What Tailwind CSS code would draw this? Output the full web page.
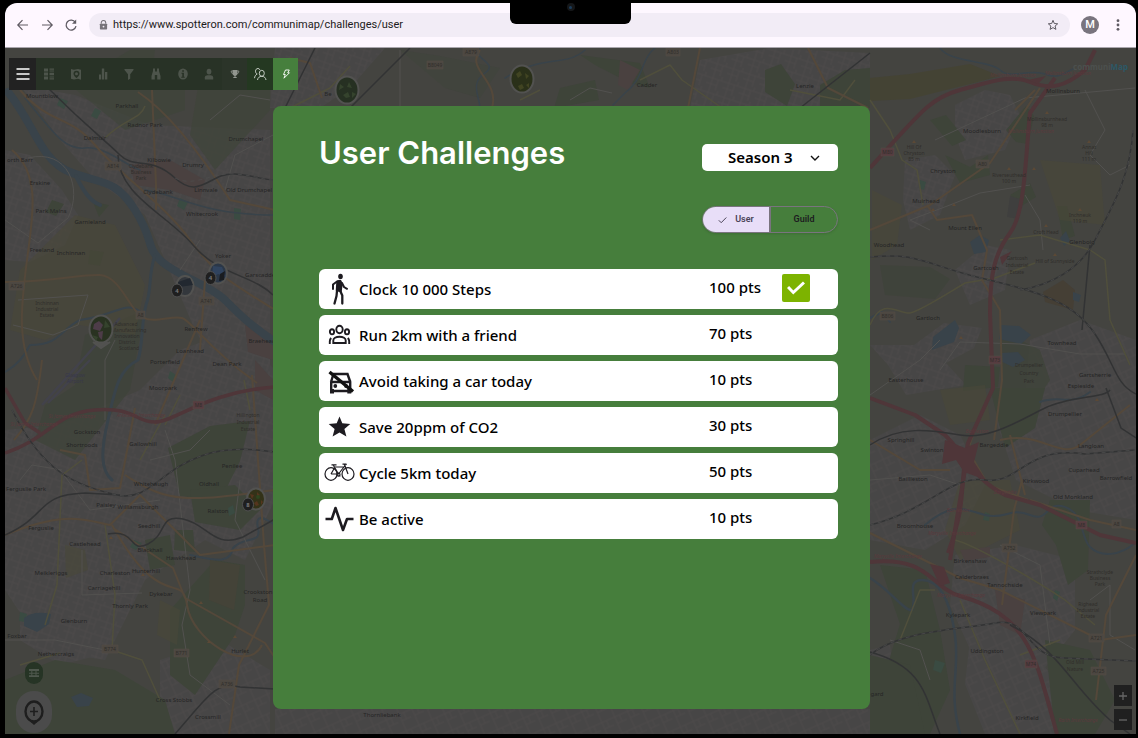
<!DOCTYPE html>
<html lang="en">
<head>
<meta charset="utf-8">
<meta name="viewport" content="width=device-width, initial-scale=1">
<title>CommuniMap – User Challenges</title>
<script src="https://cdn.jsdelivr.net/npm/@tailwindcss/browser@4"></script>
</head>
<body class="bg-black font-['Noto_Sans',sans-serif] text-black">
<div class="flex min-h-screen flex-col pt-[3px] pr-[2px] pb-[4px] pl-[5px]">

  <!-- Browser bar -->
  <header class="relative flex h-[45px] items-center rounded-t-xl border-b border-[#aaa6ad] bg-[#fef7ff] pr-[10px] pl-[10px] text-[#5f5b63]">
    <div class="flex items-center gap-2">
      <button aria-label="Back" class="grid size-4 place-items-center"><svg class="size-4" viewBox="0 0 16 16" fill="none" stroke="currentColor" stroke-width="1.2"><path d="M13 8H3M7.5 3.2 2.8 8l4.7 4.8"/></svg></button>
      <button aria-label="Forward" class="grid size-4 place-items-center"><svg class="size-4" viewBox="0 0 16 16" fill="none" stroke="currentColor" stroke-width="1.2"><path d="M3 8h10M8.500 3.200 13.200 8l-4.700 4.800"/></svg></button>
      <button aria-label="Reload" class="grid size-4 place-items-center"><svg class="size-4" viewBox="0 0 16 16" fill="none" stroke="currentColor" stroke-width="1.3"><path d="M12.300 5.300A5 5 0 1 0 13 9.200"/><path d="M13.200 2.500v4.200H9z" fill="currentColor" stroke="none"/></svg></button>
    </div>
    <div class="ml-[10px] flex h-6 flex-1 items-center rounded-full bg-[#f2ecf6] pr-[11px] pl-[10px]">
      <svg class="h-[10px] w-[9px] text-[#77737a]" viewBox="0 0 10 11"><path d="M2.500 4V3a2.500 2.500 0 0 1 5 0v1" fill="none" stroke="currentColor" stroke-width="1.200"/><rect x="1" y="4" width="8" height="6.500" rx=".8" fill="currentColor"/><circle cx="5" cy="7.200" r="1" fill="#f2ecf6"/></svg>
      <input aria-label="Address" class="ml-[5px] min-w-0 flex-1 bg-transparent font-['Roboto',sans-serif] text-[11px] text-[#1d1b20] outline-none" value="https://www.spotteron.com/communimap/challenges/user">
      <button aria-label="Bookmark" class="grid size-3 place-items-center"><svg class="size-3" viewBox="0 0 12 12" fill="none" stroke="currentColor"><path d="m6 1.300 1.300 3.200 3.400.3-2.600 2.200.8 3.400L6 8.600l-2.900 1.800.8-3.400L1.300 4.800l3.400-.3z"/></svg></button>
    </div>
    <button aria-label="Profile" class="ml-[11px] grid size-[18px] place-items-center rounded-full bg-[#79747e] font-['Roboto',sans-serif] text-[11px] font-medium text-white">M</button>
    <button aria-label="More" class="ml-[11px] grid size-4 place-items-center"><svg class="h-3 w-1" viewBox="0 0 4 12" fill="currentColor"><circle cx="2" cy="1.700" r="1.400"/><circle cx="2" cy="6" r="1.400"/><circle cx="2" cy="10.300" r="1.400"/></svg></button>
    <div class="absolute inset-x-0 -top-[3px] mx-auto h-6 w-[121px] rounded-b-[6px] bg-black">
      <span class="mx-auto mt-[3px] grid size-2 place-items-center rounded-full bg-[#151719]"><span class="size-[3px] rounded-full bg-[#1c3d5c]"></span></span>
    </div>
  </header>

  <main class="relative flex flex-1 flex-col overflow-hidden bg-[#434340]">

    <!-- Dimmed street map -->
    <svg class="absolute inset-0 size-full" viewBox="5 48 1131 686" preserveAspectRatio="xMidYMid slice" font-family="'Noto Sans',sans-serif" font-size="6" text-anchor="middle" aria-hidden="true">
      <defs>
        <pattern id="streets" width="17" height="15" patternUnits="userSpaceOnUse" patternTransform="rotate(18)"><rect width="17" height="15" fill="#474646"/><path d="M0 4h17M5 0v15M0 10h11M11 4v11M14 0v4" stroke="#4c4b4b" stroke-width=".8"/></pattern>
        <pattern id="streets2" width="14" height="18" patternUnits="userSpaceOnUse" patternTransform="rotate(-24)"><rect width="14" height="18" fill="#474646"/><path d="M0 5h14M4 0v18M4 12h10M9 5v7" stroke="#4c4b4b" stroke-width=".8"/></pattern>
      </defs>
      <path d="M5 48h1131v686H5z" fill="#444440"/>

      <!-- Built-up areas -->
      <g fill="url(#streets)">
        <path d="M20 85 75 95 150 125 270 130V420L225 380 195 330 165 260 145 215 95 180 60 140z"/>
        <path d="M5 150 30 155 62 190 78 215 65 245 30 262 5 260z"/>
        <path d="M5 430 60 425 140 390 180 350 235 330 275 370V500l-30 60-40-20-60 40-40 80-60-10-40-60z"/>
        <path d="M20 545 60 535 115 555 125 615 100 655 60 665 20 640z"/>
        <path d="M275 48h110l-35 40-30 20h-50zM700 60l70-12 100 5v55H690z"/>
        <path d="M870 345l18 20 18 30 60-10-20-22 28-15 8-20-38-5-30 22z"/>
        <path d="M955 105l30-15 25 5 10 20-15 35-40 10-10-25z"/>
        <path d="M905 160l30-5 20 20-15 40-30 15-7-30z"/>
        <path d="M955 270l30-25 25 5-5 40-35 15z"/>
      </g>
      <g fill="url(#streets2)">
        <path d="M870 440l50-25 40 20 25 50-20 40-40 25-55-10z"/>
        <path d="M955 555l60-10 60 15v70l-40 50-60-20-25-55z"/>
        <path d="M1030 340l50-20 56 20v180l-60-10-60-30-20-60 30-30z"/>
        <path d="M970 640l50-5 35 45 10 54h-80l-20-50z"/>
        <path d="M160 660l60-20 50 30v64H160z"/>
        <path d="M870 650l20-5 5 50-25 15z"/>
        <path d="M275 709h595v25H275z"/>
      </g>

      <!-- Woodland, parks and fields -->
      <g fill="#3e4439">
        <path d="M130 50h25l-5 40 35-5v25l-60 20-55-45z" opacity=".6"/>
        <path d="M200 75h70v35l-55 60-25-35z" opacity=".7"/>
        <path d="M45 405l30-20 10-50 60-25-15 80-55 70-40-20z" opacity=".8"/>
        <path d="M168 448l42-22 40-5-10 40-20 40-40-5z"/>
        <path d="M175 530h18l2 22-21-2zM145 540l25-5 5 30-25 5z"/>
        <path d="M170 610l45-50 30 5v40l-10 30-40 60-25-20z"/>
        <path d="M210 560l30 5-6 45-25-10z" fill="#444338"/>
        <path d="M5 680l50-20 60 10 50 30 10 34H5z"/>
        <path d="M190 490l45-5 25 25-20 20-45-8z"/>
        <path d="M90 250l14 2-4 14-12-2zM52 200l12 4-8 12-10-4zM93 202l16 3-10 12z"/>
        <path d="M400 50l40 6 60 12-20 30-35-10z" opacity=".5"/>
        <path d="M560 88l35-8 4 20-45 8z"/>
        <path d="M580 55l60 8 10 25-20-5-35-18z"/>
        <path d="M765 70l16-6 14 20-8 22-22-14z"/>
        <path d="M820 85l25-15 25-2v40h-50z"/>
        <path d="M870 78l40-4 60-10 30 12-30 8-60 15-40 2z" fill="#45432f" opacity=".7"/>
        <path d="M930 120l22 26 14-6-20-25z"/>
        <path d="M945 155l25 12 18-12 2 20-30 8z"/>
        <path d="M1006 130l20-24 8 10-6 28-12-2z"/>
        <path d="M1057 206l10 0 8 30-12 4zM1010 195l20-12 6 14-16 10z"/>
        <path d="M880 265l50 2 20 12-15 20-50-4z" opacity=".8"/>
        <path d="M1000 330l40 20 10 30-20 30-28-10z" opacity=".8"/>
        <path d="M965 365l35 2-2 20-35 4z"/>
        <path d="M990 388l55 0-10 40-30 20z"/>
        <path d="M1050 500l40 0-2 70-20 15-12-40-14-20z"/>
        <path d="M880 565l45 5 15 60 10 60-20 44h-40l-5-60 15-50z"/>
        <path d="M1045 640l45 10 25 50-20 34h-40z"/>
        <path d="M870 655l40 10 15 69h-55z"/>
      </g>
      <g fill="#494839" opacity=".6">
        <path d="M75 215l40 10 30 60-10 50-55-10-35 15-35-10 10-60z"/>
        <path d="M960 480l50 0 10 50-60 30-15-30z"/>
        <path d="M872 190l30 15-5 40-25 15zM1040 160l60 5 5 60-45-5z"/>
        <path d="M940 390l45-5 5 35-40 5z"/>
        <path d="M65 545l20 5 3 20-22 8z"/>
        <path d="M160 600l20 10-3 35-20-10z"/>
      </g>
      <path d="M1043 292l20-12 12 10-2 20-28-8z" fill="#453f35"/>
      <path d="M1010 196l10 3-1 20-12-2z" fill="#3f3f3e"/>
      <g fill="#4a4140">
        <path d="M130 165l40-5 35 20-5 20-30-10-35-5zM245 325l28 10v25l-25-8zM255 360l18 20v20l-18-10z"/>
        <path d="M995 590l30 10-5 35-20-10zM960 550l30-3v10l-25 4zM620 60l20 10-12 20-10-5z"/>
      </g>
      <g fill="#3a4b42">
        <path d="M60 98l8 3-4 8-7-4zM95 108l6 3-4 8-6-3zM180 198l8 4-4 8-7-4zM234 208l7 1-1 11-6-1zM170 371l6 4-3 7-5-4zM134 540l8 3-6 7-6-3zM228 508l5-3 2 8-6 3zM985 512l5 2-1 7-6-1zM1055 590l5 2-3 9-4-3zM935 660l10 3-4 10-8-3zM920 180l6 2-2 8-5-2zM20 612l7 2-2 8-6-1z"/>
      </g>

      <!-- Rivers and lochs -->
      <g fill="none" stroke="#39434a" stroke-linecap="round" stroke-linejoin="round">
        <path d="M8 92C35 125 40 160 70 172S115 178 135 210 145 245 160 260 210 285 225 300 250 325 275 342" stroke-width="8"/>
        <path d="M76 176C85 195 92 202 100 205" stroke-width="4"/>
        <path d="M155 255C148 275 152 290 146 305 141 325 143 345 138 360 118 370 115 390 108 420S100 470 112 480" stroke-width="3"/>
        <path d="M141 312C125 300 118 315 80 320 60 330 60 345 30 345 20 365 8 370 5 372" stroke-width="2"/>
        <path d="M25 98C55 135 65 150 85 148S125 165 140 170M145 190C180 195 200 215 275 215" stroke-width="1.500"/>
        <path d="M190 555C215 560 230 565 233 548 245 535 262 545 258 528S268 520 275 525" stroke-width="2"/>
        <path d="M480 48c-10 10 20 15 5 25s-6 22-5 35M505 78c40-25 60-10 80-28M655 48c-15 12-10 30-30 45l-12 12" stroke-width="1.500"/>
        <path d="M940 48c10 15 50 12 60 22s30-2 45 4 20-2 28-5" stroke-width="1.500"/>
        <path d="M870 578C890 590 905 612 912 610 918 600 905 580 922 580S950 600 955 635 948 690 960 734" stroke-width="2.500"/>
        <path d="M925 525c30-25 40-15 60-10s25-8 45 0 15-15 35-8 15 30 25 40 30 10 46-5" stroke-width="2"/>
        <path d="M1040 402c20-8 30 5 50-10M870 318l12-6 8 10" stroke-width="2"/>
      </g>
      <g fill="#39434a">
        <path d="M24 618q10-8 27-4l-2 10-12 8-13-6zM71 697l10-4 12 5-4 8-12 1z"/>
        <path d="M970 242l10-7 9 5-3 12-12 2zM933 337l22-17 4 8-5 14-22 8zM1001 325l18 1 12 9-10 9-22-5zM1002 353l16-1 7 8-12 7-13-6zM1060 238l6-7 4 10-6 5zM1073 292l8 3-2 7-6-2z"/>
      </g>

      <!-- Minor roads -->
      <g fill="none" stroke="#52514f" stroke-width="1" stroke-linejoin="round">
        <path d="M28 158c40-10 55 30 40 60l-30 25L5 220M18 300l70-5-10 30-25 10-40-10M210 120l30-25 30 5M225 190l10-35 38-20M180 270l20-30M5 640h50l50 10M82 550v45l60-2M20 480l12-15 30 5M165 430l10 30 15 130-8 35 8 50 40 30M240 480l-5 40 30 60M105 420v-60l10-20M150 460l40-10 20-20M60 470l30 40 70-10"/>
        <path d="M935 140l90-42 110-10M930 230l-20-10 40-15 30-12 50-8M1085 90l20 40-15 25 20 20 20-10M940 370l20-28 60 2 60 10 45 0M870 395l50-35 20-20M1025 195l15 25 3 30M870 480l60-5 30 10M1000 545l40 20 10 80M890 640l30 10 10 30M1090 600l20-15v50l25 15M400 50v58M570 100l20-12 22 5"/>
      </g>
      <g fill="none" stroke="#504f3c" stroke-width="1.500" stroke-linejoin="round">
        <path d="M105 138c20-20 35-18 40-32M45 625l12-40 5-110 20-15M20 665l40-12M105 525l10 70-3 55 30 10 18 40M140 460l25-45M180 395l-15 30M250 410l-6-30"/>
        <path d="M870 100l20 30 12 30 15 10 6 35M870 325c12-30 30-10 40-12s30-15 55-30l30-5 40-15M1000 240l40-5 50 15 15 10 5 60 20 45M955 540c20 5 80 40 110 60l30 25M960 600l25 60 35 74M900 640l20-50 15 0M1020 655l40-15"/>
        <path d="M290 108l40-20 20-22M520 100l20-10M640 80l30-15 12 15 40 28M790 90l50 10 15-20"/>
      </g>
      <!-- A roads -->
      <g fill="none" stroke="#54483a" stroke-width="2" stroke-linejoin="round">
        <path d="M20 90C50 125 70 115 95 145S165 205 190 240 235 285 275 310"/>
        <path d="M138 92 C165 110 195 145 230 200 L275 210M152 90l4 95 0 25M12 150c30 25 20 70 15 110s-12 85 10 120M5 282c50 0 75-8 95-7s30 35 42 42 30-2 40 1 25 30 75 65"/>
        <path d="M42 360c-5 45-10 60-28 80M125 475c60 40 75 20 275 0M5 535c60-25 80-15 105-10l30-30 60 60 75-10M112 525c50 90 70 45 75 80s60 70 75 40M60 450l25 5 5 35 30-2 15-80M252 375l12 170 5 60-30 60-10 69M200 320l-45 105M205 280l-5 70M113 528l60 40 12 30 80 45 10 15"/>
        <path d="M290 58l20 5 12 35M480 50c-15 20 20 30 12 58M700 48l-12 60M808 48l20 40 40 20"/>
        <path d="M870 230l60-25 60-42 30-45 20-30M927 205l10 15 35-5 15 35-5 30 18 30 2 70-8 60M870 440l50 30 30 0M870 533l60 30 30 15 40 12 100 50 36-5M978 420l-10 30 20 35 40 15M1022 480l-8 30-12 95M1136 555l-30 60-10 85M1000 440c40-10 60 20 80 5l50-40M1030 500l60 20 46 10M1010 435l15 60M1035 90l-20 20"/>
      </g>
      <!-- Motorways -->
      <g fill="none" stroke="#4f3639" stroke-linejoin="round">
        <path d="M5 388l20 35 15 10M5 453c45-15 50-40 90-43s40 12 60 12 50-30 120-35" stroke-width="3.500"/>
        <path d="M870 168c50-55 60-70 90-78s50-16 70-8 35 5 55-12l10-20M1055 78l-25 35c-5 50-5 100-20 120s-20 40-20 80l3 75-25 55c-10 50 0 55-20 110" stroke-width="4"/>
        <path d="M870 398l45 17 30 20c20 20 30 45 60 60l35 10 60 30 36 8M870 562c60-6 60 25 90 34 70 20 75 60 97 138M955 450l10 20-15 90" stroke-width="4"/>
      </g>
      <path d="M945 440l20 8 14-6-5 20 12 18-22-8-8-12-14 4zM930 564l14 3 6 16-10 3zM1000 257l12-6-10 14zM1028 80l18-4-8 8z" fill="#4f3639"/>

      <!-- Railways -->
      <g fill="none" stroke="#323334" stroke-width="1.500">
        <path d="M48 88C90 130 105 140 120 155S150 155 175 178 210 172 235 174 260 180 275 180M118 155c0 40 50 60 75 90s60 30 80 50"/>
        <path d="M12 410c30 60 60 75 105 85s50-60 158-43M5 535c45-20 30-40 80-42l35 2M108 534c30-5 20 20 40 10s10-30 35-25 30 30 60 18l32-18M175 734c35-40 40-52 65-47l35 2"/>
        <path d="M350 108l60-60M800 108l70-55M285 108l30-60"/>
        <path d="M870 257c50-5 55 8 115 22s90 25 110 55 20 50 41 60M1020 290c30-5 60-20 75-50s35-60 38-110M1090 245l-8 85M1106 388l15 40 15 10"/>
        <path d="M870 445c30-20 60-15 90-10s60-15 85-27 60-10 65-18M870 525c60-15 80-50 115-45s40-35 100-26l50-4M870 655c30-25 90-25 125-32s30 35 70 35l71 3M1010 625c50 25 60 60 100 95l20 14M870 652c55 15 55 45 70 82"/>
      </g>
      <g fill="none" stroke="#4c4d4c" stroke-width=".8" stroke-dasharray="4 4">
        <path d="M12 410c30 60 60 75 105 85s50-60 158-43M175 178c20 10 35-6 60-4s25 6 40 6"/>
        <path d="M870 257c50-5 55 8 115 22s90 25 110 55M1020 290c30-5 60-20 75-50s35-60 38-110M870 525c60-15 80-50 115-45s40-35 100-26l50-4M870 655c30-25 90-25 125-32s30 35 70 35l71 3"/>
      </g>
      <path d="M42 405l78-87M48 403l42-43" stroke="#42424b" stroke-width="2.500"/>

      <!-- Place names -->
      <g fill="#252525">
        <text x="42" y="98">Mountblow</text><text x="127" y="108">Parkhall</text><text x="145" y="127">Radnor Park</text><text x="95" y="140">Dalmuir</text><text x="246" y="141">Drumchapel</text><text x="20" y="162">orth Barr</text><text x="159" y="162">Kilbowie</text><text x="193" y="167">Drumry</text><text x="40" y="185">Erskine</text><text x="158" y="194">Clydebank</text><text x="206" y="192">Linnvale</text><text x="249" y="192">Old Drumchapel</text><text x="51" y="213">Park Mains</text><text x="202" y="216">Whitecrook</text><text x="90" y="224">Garnieland</text><text x="42" y="252">Freeland</text><text x="71" y="255">Inchinnan</text><text x="223" y="258">Yoker</text><text x="262" y="277">Garscadden</text><text x="196" y="331">Renfrew</text><text x="262" y="343">Braehead</text><text x="190" y="353">Loanhead</text><text x="165" y="364">Porterfield</text><text x="227" y="366">Dean Park</text><text x="163" y="390">Moorpark</text>
        <text x="87" y="434">Gockston</text><text x="82" y="447">Shortroods</text><text x="143" y="446">Gallowhill</text><text x="26" y="491">Ferguslie Park</text><text x="151" y="486">Whitehaugh</text><text x="209" y="486">Oldhall</text><text x="232" y="468">Penilee</text><text x="106" y="507">Paisley</text><text x="138" y="509">Williamsburgh</text><text x="218" y="513">Ralston</text><text x="41" y="530">Ferguslie</text><text x="149" y="528">Seedhill</text><text x="85" y="546">Castlehead</text><text x="150" y="552">Blackhall</text><text x="181" y="560">Hawkhead</text><text x="51" y="575">Meikleriggs</text><text x="115" y="575">Charleston</text><text x="146" y="573">Hunterhill</text><text x="104" y="590">Carriagehill</text><text x="161" y="596">Dykebar</text><text x="130" y="608">Thornly Park</text><text x="74" y="623">Glenburn</text><text x="17" y="638">Foxbar</text><text x="56" y="656">Nethercraigs</text><text x="240" y="653">Hurlet</text><text x="258" y="594">Crookston</text><text x="260" y="602">Road</text><text x="174" y="702">Cross Stobbs</text><text x="208" y="719">Crossmill</text><text x="382" y="717">Thornliebank</text>
        <text x="328" y="96">Be</text><text x="647" y="87">Cadder</text><text x="805" y="88">Lenzie</text>
        <text x="1063" y="93">Mollinsburn</text><text x="982" y="133">Moodiesburn</text><text x="943" y="173">Chryston</text><text x="926" y="203">Muirhead</text><text x="965" y="230">Mount Ellen</text><text x="986" y="270">Gartcosh</text><text x="889" y="247">Woodhead</text><text x="928" y="320">Gartloch</text><text x="1062" y="345">Townhead</text><text x="906" y="382">Easterhouse</text><text x="1095" y="377">Gartsherrie</text><text x="1081" y="388">Espieside</text><text x="1082" y="244">Glenboig</text>
        <text x="1065" y="416">Drumpellier</text><text x="901" y="442">Springhill</text><text x="932" y="452">Swinton</text><text x="994" y="447">Bargeddie</text><text x="1091" y="448">Langloan</text><text x="913" y="481">Baillieston</text><text x="1084" y="472">Cuparhead</text><text x="1116" y="480">Barrowfield</text><text x="1036" y="483">Kirkwood</text><text x="1073" y="499">Old Monkland</text><text x="915" y="528">Broomhouse</text><text x="970" y="563">Birkenshaw</text><text x="972" y="579">Calderbraes</text><text x="1005" y="587">Tannochside</text><text x="1043" y="615">Viewpark</text><text x="958" y="617">Kylepark</text><text x="987" y="653">Uddingston</text><text x="1027" y="720">Kirkfield</text><text x="877" y="696">gard</text>
      </g>
      <g fill="#302e2b" font-size="5">
        <text x="141" y="168">Clydebank</text><text x="141" y="174">Business</text><text x="141" y="180">Park</text><text x="47" y="305">Inchinnan</text><text x="47" y="311">Industrial</text><text x="47" y="317">Estate</text><text x="126" y="326">Advanced</text><text x="129" y="332">Manufacturing</text><text x="127" y="338">Innovation</text><text x="127" y="344">District</text><text x="129" y="350">Scotland</text><text x="248" y="417">Hillington</text><text x="248" y="424">Industrial</text><text x="248" y="431">Estate</text><text x="75" y="377" fill="#38384a">Glasgow</text><text x="75" y="383" fill="#38384a">Airport</text>
        <text x="914" y="149">Hill Of</text><text x="914" y="155">Chryston</text><text x="914" y="161">85 m</text><text x="1047" y="121">Mollinsburnhead</text><text x="1047" y="127">98 m</text><text x="1089" y="149">Annat</text><text x="1089" y="155">Hill</text><text x="1089" y="161">111 m</text><text x="1009" y="177">Riverseuthead</text><text x="1009" y="183">100 m</text><text x="1080" y="217">Inchneuk</text><text x="1080" y="223">119 m</text><text x="1046" y="234">Croft Head</text><text x="1055" y="263">Hill of Sunnyside</text><text x="1017" y="260">Gartcosh</text><text x="1017" y="267">Industrial</text><text x="1017" y="274">Estate</text><text x="1029" y="367">Drumpellier</text><text x="1029" y="375">Country</text><text x="1029" y="383">Park</text><text x="1100" y="574">Strathclyde</text><text x="1100" y="580">Business</text><text x="1100" y="586">Park</text><text x="1088" y="606">Righead</text><text x="1088" y="612">Industrial</text><text x="1088" y="618">Estate</text><text x="1075" y="664">Old Mill</text><text x="1075" y="671">Nature</text>
      </g>
      <g fill="#5a3a3d" font-size="5" font-style="italic">
        <text x="72" y="418">St James Interchange</text><text x="141" y="417">Arkleston Interchange</text><text x="34" y="426">St James Interchange</text><text x="1013" y="77">Mollinsburn Junction</text><text x="1068" y="75">Mollinsburn Junction</text><text x="1031" y="133">Mollinsburn Junction</text><text x="952" y="535">Maryville Interchange</text><text x="961" y="597">Maryville Interchange</text><text x="898" y="558">Maryville Interchange</text><text x="1078" y="722">Raith Interchange</text><text x="977" y="433">Baillieston</text><text x="958" y="512">Baillieston</text><text x="1005" y="494">Bargeddie</text>
      </g>
      <g fill="#4c4741" stroke="#554e46" stroke-width=".5">
        <path d="M105 162h16v8h-16zM9 282h15v8H9zM199 297h15v8h-15zM136 311h9v8h-9zM102 645h16v8h-16zM174 649h15v8h-15zM219 680h16v8h-16zM976 160h13v8h-13zM880 312h15v8h-15zM1002 544h15v8h-15zM1089 634h15v8h-15zM1091 667h15v8h-15zM1112 520h9v8h-9zM463 48h16v8h-16zM666 48h14v8h-14zM427 61h16v8h-16z"/>
        <path d="M193 401h11v8h-11zM881 148h13v8h-13zM989 356h12v8h-12zM1076 521h11v8h-11zM1025 660h12v8h-12z" fill="#563c40"/>
      </g>
      <g fill="#302e2b" font-size="5">
        <text x="113" y="168">A814</text><text x="16.500" y="288">A726</text><text x="206.500" y="303">A741</text><text x="140.500" y="317">A8</text><text x="110" y="651">B774</text><text x="181.500" y="655">B771</text><text x="227" y="686">A736</text><text x="982.500" y="166">A80</text><text x="887.500" y="318">B806</text><text x="1009.500" y="550">A752</text><text x="1096.500" y="640">A721</text><text x="1098.500" y="673">A725</text><text x="1116.500" y="526">A8</text><text x="198.500" y="407">M8</text><text x="887.500" y="154">M80</text><text x="995" y="362">M73</text><text x="1081.500" y="527">M8</text><text x="1031" y="666">M74</text><text x="471" y="54">A879</text><text x="673" y="54">A803</text><text x="435" y="67">B8049</text>
      </g>
      <g fill="#5b4936">
        <path d="m914 140 2 3h-4zM1047 111l2 3h-4zM1089 140l2 3h-4zM1009 167l2 3h-4zM1034 167l2 3h-4zM954 203l2 3h-4zM933 208l2 3h-4zM1080 208l2 3h-4zM1046 224l2 3h-4zM1055 253l2 3h-4zM961 336l2 3h-4zM1097 398l2 3h-4zM209 640l2 3h-4zM235 635l2 3h-4zM201 601l2 3h-4zM143 573l2 3h-4zM111 536l2 3h-4z"/>
      </g>

      <!-- Photo pins -->
      <g stroke="#525250" stroke-width="2">
        <path d="M93 342l8 6 9-6" fill="#525250"/>
        <ellipse cx="101" cy="329" rx="11.500" ry="13.500" fill="#293221"/>
        <ellipse cx="347" cy="90" rx="11.500" ry="13.500" fill="#263022"/>
        <ellipse cx="522" cy="79" rx="11.500" ry="13.500" fill="#2a3019"/>
        <ellipse cx="185" cy="286" rx="8.500" ry="10" fill="#33373c"/>
        <ellipse cx="218" cy="273" rx="9" ry="10.500" fill="#2b3747"/>
        <ellipse cx="256" cy="499" rx="9" ry="10.500" fill="#333218"/>
      </g>
      <g>
        <path d="M94 324l5-3 4 4-3 6-7-2zM98 332l5-1-1 9-3-3z" fill="#4d3c48"/>
        <path d="M92 335l6 2-2 4zM105 320l5 7-6 1zM340 84l4 3-5 3zM349 82l3 6-5-1zM343 95l5-3 2 5-4 1zM352 92l4 2-4 4z" fill="#35432d"/>
        <path d="M516 74l4-3 2 4-4 3zM525 73l4 3-3 3zM518 86l4-2 2 4-4 2zM526 85l3-2v5z" fill="#414422"/>
        <path d="M178 282l12-4 3 7-14 2z" fill="#222830"/><path d="M213 266l9 1 4 10-8-3-6 4z" fill="#30435e"/>
        <path d="M220 274l5-3-1 9-5 1z" fill="#191c20"/>
        <path d="M250 494l4 1-2 4zM257 492l3 3-3 2zM254 503l3-2 2 4-3 1zM261 500l2 2-2 3z" fill="#55351e"/><circle cx="258" cy="497" r="2" fill="#2e451f"/>
      </g>
      <g fill="#1f1f1f" stroke="#505050" stroke-width="1"><ellipse cx="177" cy="290.500" rx="5.500" ry="6.500"/><ellipse cx="210.500" cy="278" rx="5.500" ry="6.500"/><ellipse cx="248" cy="504.500" rx="5.500" ry="6.500"/></g>
      <g fill="#777" font-size="6" font-weight="700"><text x="177" y="293">4</text><text x="210.500" y="280">4</text><text x="248" y="507">8</text></g>
    </svg>

    <a href="#" class="absolute top-[13px] right-[8px] text-[8px] leading-[12px] font-bold text-[#4c504e]">communi<span class="text-[#2c5866]">Map</span></a>

    <!-- Tool strip -->
    <nav aria-label="Tools" class="absolute top-[10px] left-[4px] flex h-8 bg-[#283226] text-[#4d544b] [&_svg]:size-4">
      <button aria-label="Menu" class="grid w-[27px] place-items-center bg-[#222222] text-white"><svg viewBox="0 0 16 16" stroke="currentColor" stroke-width="1.400"><path d="M1.500 3h13M1.500 8h13M1.500 13h13"/></svg></button>
      <button aria-label="List" class="grid w-[26px] place-items-center"><svg viewBox="0 0 16 16" fill="currentColor"><path d="M3 2.500h4v3H3zM3 6.500h4v3H3zM3 10.500h4v3H3zM8.500 2.500H13v1.200H8.500zM8.500 4.500H13v1H8.500zM8.500 6.700H13v2.500H8.500zM8.500 10.500H13v1H8.500zM8.500 12.300H13v1.200H8.500z"/></svg></button>
      <button aria-label="Map" class="grid w-[27px] place-items-center"><svg viewBox="0 0 16 16" fill="currentColor"><path fill-rule="evenodd" d="m3 3 3 .8 4-.8 3 .7v10l-3-.9-4 .7-3-.8zm5.500 1.800a3 3 0 0 0-3 3c0 2.200 3 4.400 3 4.400s3-2.200 3-4.400a3 3 0 0 0-3-3z"/><circle cx="8.500" cy="7.800" r="1.500"/></svg></button>
      <button aria-label="Statistics" class="grid w-[27px] place-items-center"><svg viewBox="0 0 16 16" fill="currentColor"><path d="M4 8.500h2v5H4zM6.800 2.500h2.400v11H6.800zM10 6h2.300v7.500H10z"/></svg></button>
      <button aria-label="Filter" class="grid w-[26px] place-items-center"><svg viewBox="0 0 16 16" fill="currentColor"><path d="M3.500 3h9v1L9.200 8.200v4.600L7 14V8.200L3.500 4z"/></svg></button>
      <button aria-label="Search" class="grid w-[27px] place-items-center"><svg viewBox="0 0 16 16" fill="currentColor"><path d="M5 2.500h2v3h2v-3h2V5l1.500 5v3.500H9.200V9H6.800v4.500H3.500V10L5 5z"/></svg></button>
      <button aria-label="Information" class="grid w-[27px] place-items-center"><svg viewBox="0 0 16 16"><ellipse cx="8" cy="8" rx="4.800" ry="5.500" fill="currentColor"/><path d="M7.200 4.300h1.700v1.500H7.200zM6.500 6.800h2.400v4h.8v1H6.300v-1h1V7.700h-.8z" fill="#283226"/></svg></button>
      <button aria-label="Profile" class="grid w-[26px] place-items-center"><svg viewBox="0 0 16 16" fill="currentColor"><ellipse cx="8" cy="5.600" rx="2.400" ry="2.900"/><path d="M3.800 13.500v-2c0-1.500 1.500-2.200 2.700-2.200h3c1.200 0 2.700.7 2.700 2.200v2z"/></svg></button>
      <button aria-label="Awards" class="grid w-[25px] place-items-center bg-[#2b3429] text-[#92968f]"><svg viewBox="0 0 16 16"><path d="M5.500 4h5v2.600c0 2-1 3.200-2 3.400V11h1.200v1H6.300v-1h1.200v-1c-1-.2-2-1.400-2-3.400z" fill="currentColor"/><path d="M5.500 5H4.200c0 1.700.5 2.500 1.800 3M10.500 5h1.300c0 1.700-.5 2.500-1.800 3" fill="none" stroke="currentColor" stroke-width=".8"/></svg></button>
      <button aria-label="Guilds" class="grid w-[26px] place-items-center bg-[#243821] text-[#d3d9d1]"><svg viewBox="0 0 16 16" fill="none" stroke="currentColor" stroke-width=".9"><ellipse cx="9.800" cy="7.300" rx="2.500" ry="3"/><path d="M5.500 14c.3-2.200 1.900-3.700 4.300-3.700s3.900 1.500 4.200 3.700M7.900 3.900C7.600 3 6.900 2.500 6 2.500c-1.500 0-2.500 1.100-2.500 2.700 0 1.400.6 2.400 1.700 2.800M2.500 12.200c.2-1.800 1-3.400 2.700-4.200"/></svg></button>
      <button aria-label="Challenges" aria-current="page" class="grid w-[25px] place-items-center bg-[#467f3d] text-white"><svg viewBox="0 0 16 16" fill="none" stroke="currentColor" stroke-width=".9" stroke-linejoin="round"><path d="M7.500 4h3.800L9.700 6.800h1.700L6 12.200l1.300-3.700H5.500z"/></svg></button>
    </nav>

    <!-- Challenges panel -->
    <section aria-labelledby="title" class="relative mx-auto mt-[58px] mb-[25px] min-h-[603px] w-[597px] max-w-full translate-x-px rounded-[8px] bg-[#467e3c] pr-8 pl-[46px]">
      <div class="flex items-start justify-between">
        <h1 id="title" class="mt-[27px] font-['Inter',sans-serif] text-[31px] leading-10 font-semibold text-white">User Challenges</h1>
        <div class="flex w-[136px] flex-col gap-[35px] pt-[38px]">
          <div class="relative">
            <select aria-label="Season" class="block h-[27px] w-full appearance-none rounded-[5px] bg-white pb-px pl-[26px] text-[15px] leading-5 font-semibold"><option>Season 3</option></select>
            <svg class="pointer-events-none absolute top-[10px] right-[18px] h-2 w-[10px]" viewBox="0 0 10 8" fill="none" stroke="#111" stroke-width="1.400"><path d="m1 2 4 4 4-4"/></svg>
          </div>
          <div role="radiogroup" aria-label="Challenge type" class="flex h-[27px] overflow-hidden rounded-full border border-[#79747e] font-['Roboto',sans-serif] text-[9px] font-semibold shadow-sm">
            <label class="flex flex-1 items-center justify-center gap-2 bg-[#e8def8] text-[#4a4458]"><input type="radio" name="type" class="sr-only" checked><svg class="h-2 w-[9px]" viewBox="0 0 9 8" fill="none" stroke="currentColor"><path d="m.8 4.300 2.400 2.400L8.300 1.500"/></svg>User</label>
            <label class="flex flex-1 items-center justify-center border-l-2 border-[#79747e] text-[#1d1b20]"><input type="radio" name="type" class="sr-only">Guild</label>
          </div>
        </div>
      </div>

      <ul class="mt-9 flex flex-col gap-[6px] text-[15px] leading-5 font-medium [&_li]:flex [&_li]:h-10 [&_li]:items-center [&_li]:rounded-[6px] [&_li]:bg-white [&_li]:pl-1 [&_svg]:text-[#1d1b20]">
        <li>
          <svg class="h-8 w-8" viewBox="0 0 32 32" fill="none" stroke="currentColor" stroke-linecap="round" stroke-linejoin="round"><ellipse cx="17.500" cy="3.400" rx="2.300" ry="2.700" fill="currentColor" stroke="none"/><path d="m14.500 8 3-.5 1.500 3-1 8-4.500-1 .5-8z" fill="currentColor" stroke-width="1.500"/><path d="m14 8.500-4 3v4.500M19 10l2 4 3 1.800" stroke-width="2"/><path d="m14 18-.5 5-2 7.500M17.500 18.500l1.800 4v8" stroke-width="2.300"/></svg>
          <span class="ml-1 w-[350px]">Clock 10 000 Steps</span><span class="w-[73px] pb-1">100 pts</span>
          <span class="relative mb-[3px] size-7"><input type="checkbox" checked aria-label="Clock 10 000 Steps completed" class="block size-7 appearance-none rounded-[2px] bg-[#7db300]"><svg class="pointer-events-none absolute top-[5px] left-[5px] size-[18px]" viewBox="0 0 18 18" fill="none" stroke="#fff" stroke-width="3"><path d="m1 8 5.300 5.500L17 3.500"/></svg></span>
        </li>
        <li>
          <svg class="h-8 w-8" viewBox="0 0 32 32" fill="none" stroke="currentColor" stroke-width="1.900"><ellipse cx="16.500" cy="10.500" rx="3.200" ry="3.700"/><ellipse cx="9" cy="12.800" rx="2.100" ry="2.600"/><ellipse cx="24" cy="12.800" rx="2.100" ry="2.600"/><path d="M10.300 24v-2.500c0-2 2.500-3.800 6.200-3.800s6.200 1.800 6.200 3.800V24zM6.800 25v-2.800c0-1.300.5-2.200 1.400-3.200M26.200 25v-2.800c0-1.300-.5-2.200-1.400-3.200"/></svg>
          <span class="ml-1 w-[350px]">Run 2km with a friend</span><span class="pb-1">70 pts</span>
        </li>
        <li>
          <svg class="h-8 w-8" viewBox="0 0 32 32" fill="none" stroke="currentColor"><path d="M8 17 10.500 9h14l2.800 8M8.200 17v9h19v-9z" stroke-width="2.400"/><path d="M7 24h4v4.500H7zM24.300 24h4v4.500h-4z" fill="currentColor" stroke="none"/><circle cx="12.300" cy="21" r="1.900" fill="currentColor" stroke="none"/><circle cx="23" cy="21" r="1.900" fill="currentColor" stroke="none"/><path d="M6.500 7 30 26.500" stroke-width="3.400" stroke="#111"/></svg>
          <span class="ml-1 w-[350px]">Avoid taking a car today</span><span class="pb-1">10 pts</span>
        </li>
        <li>
          <svg class="h-8 w-8" viewBox="0 0 32 32" fill="currentColor"><path d="m16.500 5.500 2.800 6.800 8 .8-5.900 5 2 7.400-6.900-3.900-6.900 3.900 2-7.400-5.900-5 8-.8z"/></svg>
          <span class="ml-1 w-[350px]">Save 20ppm of CO2</span><span class="pb-1">30 pts</span>
        </li>
        <li>
          <svg class="h-8 w-8" viewBox="0 0 32 32" fill="none" stroke="currentColor" stroke-width="1.200"><ellipse cx="8" cy="17" rx="6" ry="6.300"/><ellipse cx="25" cy="17" rx="6" ry="6.300"/><path d="m8 17 4-7h9.500M8 17h7.500l6.200-8M10.500 8.500l5 8.500M21.500 7.500l3.500 9.500M8.500 7.800h5M19.500 7.200H23l.3 1M14.500 19h3"/><circle cx="15.500" cy="17.500" r="1.500"/></svg>
          <span class="ml-1 w-[350px]">Cycle 5km today</span><span class="pb-1">50 pts</span>
        </li>
        <li>
          <svg class="h-8 w-8" viewBox="0 0 32 32" fill="none" stroke="currentColor" stroke-width="2.600" stroke-linejoin="round"><path d="M2.500 16h6.300l3.700-11L20 27l4-11h6.500"/></svg>
          <span class="ml-1 w-[350px]">Be active</span><span class="pb-1">10 pts</span>
        </li>
      </ul>
    </section>

    <!-- Map controls -->
    <div class="absolute bottom-[1px] left-[11px] flex flex-col items-center gap-[7px]">
      <button aria-label="Gallery" class="grid h-[22px] w-[18px] place-items-center rounded-full bg-[#263425] text-[#4e574d]"><svg class="h-[10px] w-3" viewBox="0 0 12 10" fill="currentColor"><path fill-rule="evenodd" d="M1 1h10v8H1zm0 2v1.700h2.300V3zm3.300 0v1.700h3.200V3zm4.200 0v1.700H11V3zM1 5.700v1.500h2.300V5.700zm3.300 0v1.500h3.200V5.700zm4.200 0v1.500H11V5.700z"/></svg></button>
      <button aria-label="Add a spot" class="grid h-[42px] w-9 place-items-center rounded-full bg-[#4b4b4b] text-[#1e1e1e]"><svg class="h-[27px] w-[22px]" viewBox="0 0 22 27" fill="none" stroke="currentColor" stroke-width="2.400"><ellipse cx="11" cy="12.500" rx="8.500" ry="10"/><path d="M11 8v9M7 12.500h8" stroke-width="1.600"/><path d="M7 22.500h8L11 26z" fill="currentColor" stroke="none"/></svg></button>
    </div>
    <div class="absolute right-[4px] bottom-[4px] flex flex-col gap-[3px] text-[#666]">
      <button aria-label="Zoom in" class="grid h-[21px] w-[18px] place-items-center bg-[#202020]"><svg class="size-[10px]" viewBox="0 0 10 10" stroke="currentColor" stroke-width="1.300"><path d="M1 5h8M5 1v8"/></svg></button>
      <button aria-label="Zoom out" class="grid h-[21px] w-[18px] place-items-center bg-[#202020]"><svg class="size-[10px]" viewBox="0 0 10 10" stroke="currentColor" stroke-width="1.300"><path d="M1 5h8"/></svg></button>
    </div>
  </main>
</div>
</body>
</html>
